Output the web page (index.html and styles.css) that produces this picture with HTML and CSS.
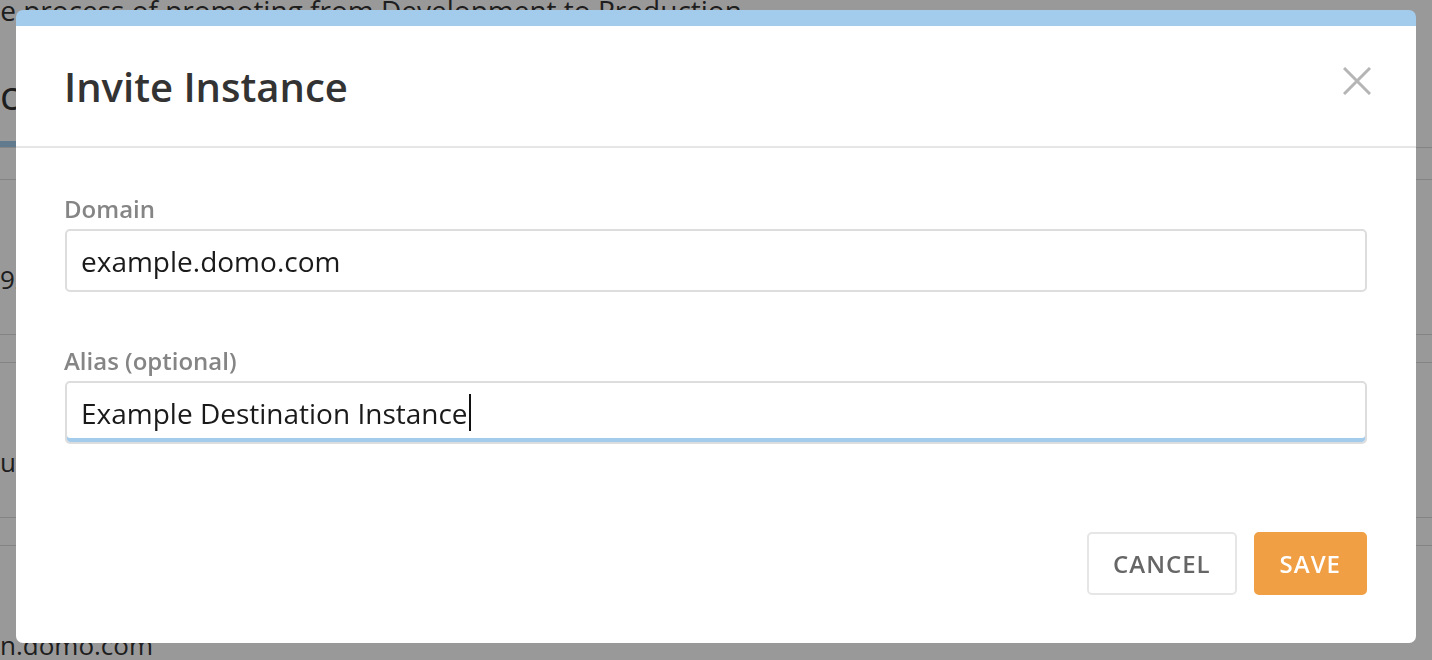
FILE: index.html
```html
<!DOCTYPE html>
<html lang="en">
<head>
<meta charset="UTF-8">
<meta name="viewport" content="width=device-width, initial-scale=1.0">
<title>Invite Instance</title>
<link rel="stylesheet" href="styles.css">
</head>
<body>

<div class="page">
    <p class="intro">the process of promoting from Development to Production</p>
    <div class="tabs">
        <span class="tab active">connected instances</span>
    </div>
    <ul class="instances">
        <li class="instance">92f1 Staging Instance</li>
        <li class="instance">uvw-sandbox.domo.com</li>
        <li class="instance">n.domo.com</li>
    </ul>
</div>

<div class="backdrop"></div>

<div class="modal">
    <div class="modal-header">
        <h2>Invite Instance</h2>
        <button class="close" type="button" aria-label="Close">
            <svg width="28" height="28" viewBox="0 0 28 28">
                <path d="M1 1 L27 27 M27 1 L1 27" stroke="#b5b5b5" stroke-width="3" fill="none"/>
            </svg>
        </button>
    </div>
    <div class="modal-body">
        <div class="field-group">
            <label class="field-label">Domain</label>
            <div class="field">example.domo.com</div>
        </div>
        <div class="field-group">
            <label class="field-label">Alias (optional)</label>
            <div class="field focused">Example Destination Instance<span class="caret"></span></div>
        </div>
    </div>
    <div class="modal-footer">
        <button class="btn btn-cancel" type="button">Cancel</button>
        <button class="btn btn-save" type="button">Save</button>
    </div>
</div>

</body>
</html>
```

FILE: styles.css
```css
body {
    font-family: "Open Sans", Arial, sans-serif;
    margin: 0;
    padding: 0;
    background: #fff;
    color: #333;
    overflow: hidden;
}
.page {
    width: 1432px;
    height: 660px;
    overflow: hidden;
}
.intro {
    font-size: 28px;
    line-height: 36px;
    margin: -8px 0 0;
    text-indent: -27px;
}
.tabs {
    height: 120px;
    border-bottom: 1px solid #ddd;
    box-sizing: border-box;
    display: flex;
    align-items: flex-end;
}
.tab {
    font-size: 40px;
    line-height: 52px;
    padding-bottom: 20px;
}
.tab.active {
    border-bottom: 6px solid #a3cbec;
}
.instances {
    list-style: none;
    margin: 31px 0 0;
    padding: 0;
}
.instance {
    border-top: 1px solid #ddd;
    border-bottom: 1px solid #ddd;
    height: 156px;
    padding-top: 81px;
    box-sizing: border-box;
    font-size: 26px;
    line-height: 36px;
    margin-bottom: 27px;
}
.backdrop {
    position: fixed;
    top: 0;
    left: 0;
    right: 0;
    bottom: 0;
    background: rgba(0, 0, 0, 0.4);
}
.modal {
    position: fixed;
    top: 10px;
    left: 16px;
    width: 1400px;
    height: 633px;
    box-sizing: border-box;
    background: #fff;
    border-top: 16px solid #a3cbec;
    border-radius: 7px;
    display: flex;
    flex-direction: column;
}
.modal-header {
    height: 122px;
    box-sizing: border-box;
    border-bottom: 2px solid #e6e6e6;
    padding: 0 45px 0 48px;
    display: flex;
    align-items: center;
    justify-content: space-between;
}
.modal-header h2 {
    margin: 0;
    font-size: 40px;
    font-weight: 600;
    color: #333;
}
.close {
    background: none;
    border: none;
    padding: 0;
    margin-bottom: 10px;
    width: 28px;
    height: 28px;
    cursor: pointer;
}
.close svg {
    display: block;
}
.modal-body {
    padding: 46px 49px 0;
}
.field-group {
    margin-bottom: 54px;
}
.field-label {
    display: block;
    font-size: 24px;
    font-weight: 600;
    line-height: 30px;
    color: #858585;
    margin-bottom: 5px;
    margin-left: -1px;
}
.field {
    height: 63px;
    box-sizing: border-box;
    border: 2px solid #ddd;
    border-radius: 5px;
    padding: 0 14px;
    font-size: 28px;
    color: #1a1a1a;
    display: flex;
    align-items: center;
}
.field.focused {
    box-shadow: inset 0 -4px 0 #a3cbec;
}
.caret {
    display: inline-block;
    width: 2px;
    height: 37px;
    background: #111;
    margin-left: 1px;
}
.modal-footer {
    margin-top: auto;
    padding: 0 49px 48px;
    display: flex;
    justify-content: flex-end;
    gap: 17px;
}
.btn {
    font-family: "Open Sans", Arial, sans-serif;
    height: 63px;
    padding: 0 24px;
    font-size: 24px;
    font-weight: 600;
    letter-spacing: 1px;
    text-transform: uppercase;
    border-radius: 5px;
    cursor: pointer;
}
.btn-cancel {
    background: #fff;
    border: 2px solid #e6e6e6;
    color: #666;
}
.btn-save {
    background: #f09f45;
    border: 2px solid #f09f45;
    color: #fff;
}
```
